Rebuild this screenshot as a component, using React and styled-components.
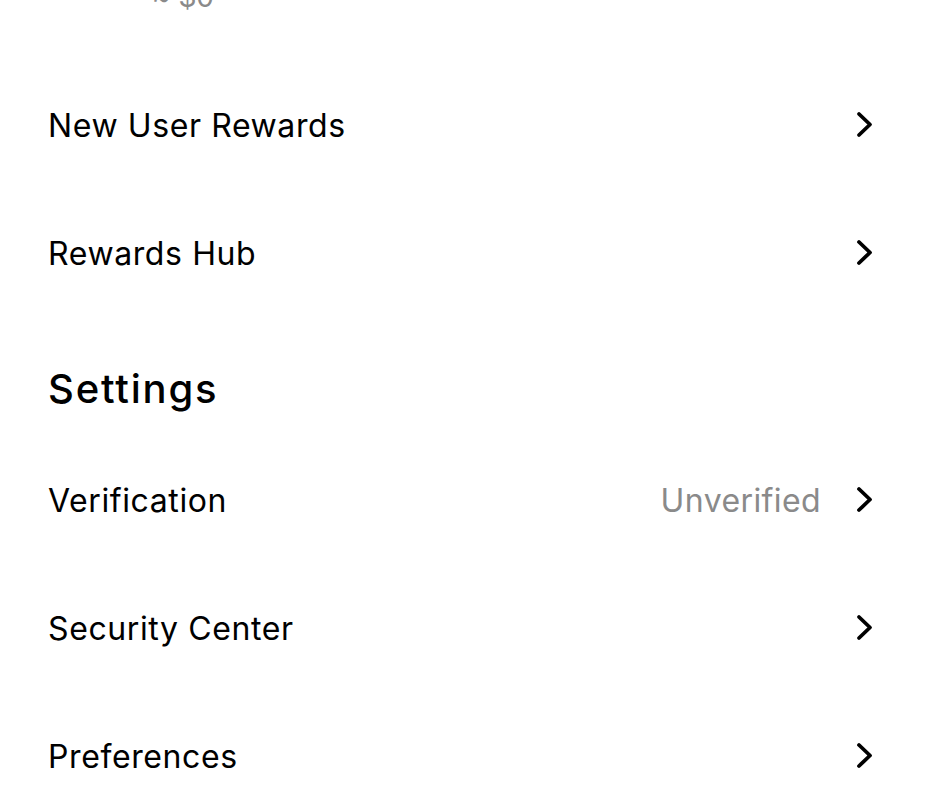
import React from "react";
import styled, { createGlobalStyle } from "styled-components";

const Global = createGlobalStyle`
  html, body { margin: 0; padding: 0; background: #ffffff; }
  body { font-family: Inter, "Noto Sans", "Liberation Sans", sans-serif; color: #000; -webkit-font-smoothing: antialiased; }
`;

const Page = styled.div`
  padding: 0 61px 0 48px;
  overflow: hidden;
  height: 809px;
`;

const BalanceWrap = styled.div`
  height: 61px;
  overflow: hidden;
`;

const Balance = styled.div`
  margin-top: -20px;
  padding-left: 104px;
  font-size: 28px;
  line-height: 34px;
  color: #8a8a8a;
`;

const Row = styled.div`
  height: 128px;
  display: flex;
  align-items: center;
  justify-content: space-between;
`;

const Label = styled.span`
  font-size: 32px;
  font-weight: 400;
  letter-spacing: 0.6px;
`;

const Right = styled.div`
  display: flex;
  align-items: center;
  gap: 34px;
`;

const Status = styled.span`
  font-size: 32px;
  letter-spacing: 0.4px;
  color: #8a8a8a;
`;

const SectionTitle = styled.h2`
  margin: 0;
  box-sizing: border-box;
  height: 119px;
  padding-top: 24px;
  display: flex;
  align-items: center;
  font-size: 40px;
  font-weight: 500;
  letter-spacing: 1.8px;
`;

const Chevron = () => (
  <svg width="20" height="30" viewBox="0 0 20 30" fill="none" style={{ display: "block" }}>
    <path d="M4 4 L15 14.5 L4 25" stroke="#000" strokeWidth="3.8" strokeLinecap="round" strokeLinejoin="round" />
  </svg>
);

const Item = ({ label, status }) => (
  <Row>
    <Label>{label}</Label>
    <Right>
      {status && <Status>{status}</Status>}
      <Chevron />
    </Right>
  </Row>
);

export default function App() {
  return (
    <>
      <Global />
      <Page>
        <BalanceWrap>
          <Balance>≈ $0</Balance>
        </BalanceWrap>
        <Item label="New User Rewards" />
        <Item label="Rewards Hub" />
        <SectionTitle>Settings</SectionTitle>
        <Item label="Verification" status="Unverified" />
        <Item label="Security Center" />
        <Item label="Preferences" />
      </Page>
    </>
  );
}
